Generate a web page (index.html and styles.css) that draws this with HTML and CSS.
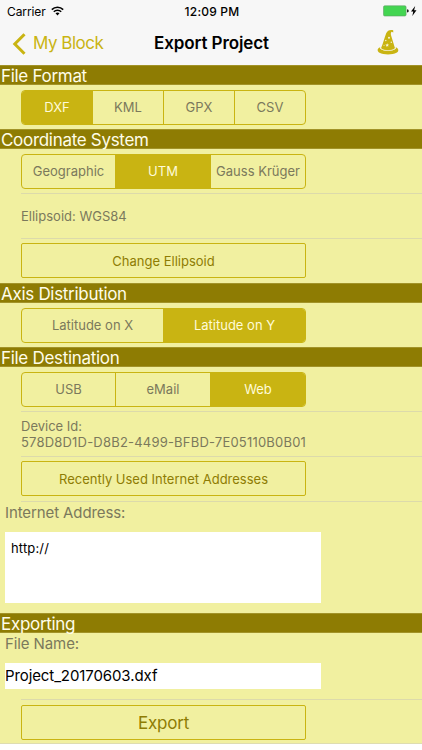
FILE: index.html
```html
<!DOCTYPE html>
<html lang="en">
<head>
<meta charset="utf-8">
<title>Export Project</title>
<link rel="stylesheet" href="styles.css">
</head>
<body>
<header class="top">
  <div class="status">
    <div class="carrier"><span>Carrier</span>
      <svg width="13" height="10" viewBox="0 0 13 10"><g fill="none" stroke="#000" stroke-width="1.6"><path d="M.8 3.6a8.1 8.1 0 0 1 11.4 0M2.8 5.8a5.2 5.2 0 0 1 7.4 0"/></g><path d="M6.5 9.5 4.5 7.3a3 3 0 0 1 4 0z"/></svg>
    </div>
    <div class="time">12:09 PM</div>
    <div class="power">
      <svg width="34" height="12" viewBox="0 0 34 12"><rect x=".5" y=".8" width="22.6" height="10.2" rx="1.3" fill="#43d551" stroke="#5f9d65" stroke-width=".6"/><path d="M24 4.2q1.8.3 1.8 1.7T24 7.6z" fill="#222"/><path d="M32.2 1 28 6.5h2.3L29.3 11l4.2-5.7h-2.4z"/></svg>
    </div>
  </div>
  <nav class="nav">
    <a class="back"><svg width="14" height="22" viewBox="0 0 14 22"><path d="M12.5 1.2 2.8 11l9.7 9.8" fill="none" stroke="#c9b412" stroke-width="3"/></svg><span>My Block</span></a>
    <h1>Export Project</h1>
    <svg class="wizard" width="22" height="26" viewBox="0 0 22 26"><path d="M4 19.3C6.2 14.5 7.5 8.5 9.2 4.2 10.3 1.4 13.5.2 16.2 1.3l.1 2.2-1.7-.8c-.9.8-.9 2.2-.5 3.8l3.9 12.8c-3.2 2.9-10.8 2.9-14 0z" fill="#c9b412"/><path d="M3.2 18.2C-.2 19.3 0 22.5 2.5 23.8c4 2.2 13 2.2 17 0 2.5-1.3 2.5-4.5-.8-5.6l.3 1.3c-3 3.1-13 3.1-16 0z" fill="#c9b412"/><path d="M3.6 19.4c3.3 2.9 11.5 2.9 14.8 0" fill="none" stroke="#f0ebbd" stroke-width=".7"/><g fill="#f7f4dc"><path d="m10.2 14.3.5 1.1 1.2.2-.8.9.1 1.2-1-.6-1.1.6.2-1.2-.9-.9 1.3-.2z"/><circle cx="12" cy="8.7" r="1"/><circle cx="8.8" cy="11.5" r=".7"/><circle cx="14.3" cy="13.3" r=".7"/><circle cx="7" cy="16.2" r=".5"/></g></svg>
  </nav>
</header>
<main>
  <h2>File Format</h2>
  <div class="cell"><div class="seg four"><span class="on">DXF</span><span>KML</span><span>GPX</span><span>CSV</span></div></div>
  <h2>Coordinate System</h2>
  <div class="cell"><div class="seg three"><span>Geographic</span><span class="on">UTM</span><span>Gauss Krüger</span></div></div>
  <div class="cell line"><p class="info">Ellipsoid: WGS84</p></div>
  <div class="cell line"><button class="btn">Change Ellipsoid</button></div>
  <h2>Axis Distribution</h2>
  <div class="cell"><div class="seg two"><span>Latitude on X</span><span class="on">Latitude on Y</span></div></div>
  <h2>File Destination</h2>
  <div class="cell"><div class="seg three"><span>USB</span><span>eMail</span><span class="on">Web</span></div></div>
  <div class="cell line"><p class="info device">Device Id:<br><span>578D8D1D-D8B2-4499-BFBD-7E05110B0B01</span></p></div>
  <div class="cell line"><button class="btn">Recently Used Internet Addresses</button></div>
  <div class="form address line"><label>Internet Address:</label><div class="area">http://</div></div>
  <h2>Exporting</h2>
  <div class="form file"><label>File Name:</label><div class="input">Project_20170603.dxf</div></div>
  <div class="cell line last"><button class="btn big">Export</button></div>
</main>
</body>
</html>
```
FILE: styles.css
```css
* { box-sizing: border-box; }
body {
  margin: 0;
  width: 422px;
  height: 750px;
  overflow: hidden;
  background: #fff;
  font-family: Inter, "Liberation Sans", sans-serif;
  color: #000;
}
h1, h2, p { margin: 0; font-weight: 400; }
svg { display: block; flex: none; }

.top { height: 65px; background: #f7f7f7; }
.status, .nav {
  display: grid;
  grid-template-columns: 1fr auto 1fr;
  align-items: center;
}
.status { height: 22px; padding: 0 5px 0 7px; font-size: 12px; }
.carrier { display: flex; align-items: center; gap: 5px; letter-spacing: -0.1px; }
.time { font-weight: 500; letter-spacing: 0.2px; }
.power { justify-self: end; }
.nav { height: 43px; padding: 0 23px 0 12px; }
.back { display: flex; align-items: center; gap: 7px; color: #c9b412; font-size: 17px; letter-spacing: -0.5px; }
.back span { margin-top: -1px; }
.nav h1 { font-size: 17px; font-weight: 600; letter-spacing: -0.1px; margin: -1px 0 0 12px; }
.wizard { justify-self: end; margin-top: -3px; }

main { background: #f1f0a0; height: 679px; border-bottom: 1px solid #deddb0; }
h2 {
  height: 20px;
  padding-left: 1px;
  background: #8e7c03;
  border-top: 1px solid #a29328;
  border-bottom: 1px solid #a29328;
  color: #fffde9;
  font-size: 17px;
  letter-spacing: -0.3px;
  line-height: 20px;
  white-space: nowrap;
}
.cell { height: 44px; padding: 5px 0 0 21px; }
.line {
  height: 45px;
  background: linear-gradient(#dcdaab, #dcdaab) 21px 0 / 100% 1px no-repeat;
}
.last { padding-top: 6px; }
.seg {
  display: grid;
  width: 285px;
  height: 35px;
  border: 1px solid #c9b412;
  border-radius: 4px;
  overflow: hidden;
}
.four { grid-template-columns: 70px 71px 71px 1fr; }
.three { grid-template-columns: 93px 95px 1fr; }
.two { grid-template-columns: 141px 1fr; }
.seg span {
  display: flex;
  align-items: center;
  justify-content: center;
  padding-bottom: 1px;
  border-left: 1px solid #c9b412;
  color: #7b795c;
  font-size: 13px;
  white-space: nowrap;
}
.seg span:first-child { border-left: 0; }
.seg .on { background: #c9b412; color: #fffbd8; }

.info { color: #7b795c; font-size: 13px; line-height: 36px; white-space: nowrap; }
.device { line-height: 15.5px; padding-top: 3px; }
.device span { letter-spacing: 0.2px; }
.btn {
  display: block;
  width: 285px;
  height: 35px;
  padding: 0;
  border: 1px solid #c9b412;
  border-radius: 2px;
  background: none;
  color: #8e7c03;
  font: 13px Inter, sans-serif;
}
.big { font-size: 17px; letter-spacing: -0.2px; }
.form { padding-left: 5px; color: #7b795c; font-size: 15px; letter-spacing: -0.1px; }
.form label { display: block; line-height: 23px; }
.address { height: 112px; }
.area {
  width: 316px;
  height: 71px;
  margin-top: 8px;
  padding: 8px 6px;
  background: #fff;
  color: #000;
  font-size: 13px;
  letter-spacing: 0.15px;
  line-height: 17px;
}
.file { height: 66px; }
.file label { line-height: 22px; }
.input {
  width: 316px;
  height: 26px;
  margin-top: 8px;
  background: #fff;
  color: #000;
  line-height: 25px;
}
```
